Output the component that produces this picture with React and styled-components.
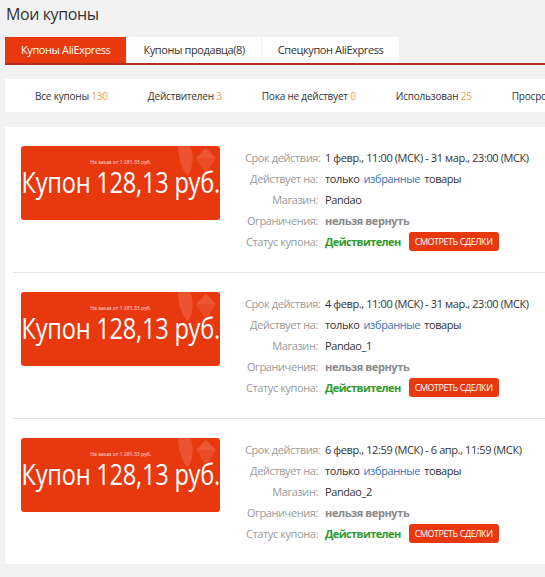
import React from "react";
import styled, { createGlobalStyle } from "styled-components";

const GlobalStyle = createGlobalStyle`
  body {
    margin: 0;
    background: #f2f2f2;
    font-family: "Open Sans", "Liberation Sans", sans-serif;
    color: #333;
  }
`;

const coupons = [
  { period: "1 февр., 11:00 (МСК) - 31 мар., 23:00 (МСК)", shop: "Pandao" },
  { period: "4 февр., 11:00 (МСК) - 31 мар., 23:00 (МСК)", shop: "Pandao_1" },
  { period: "6 февр., 12:59 (МСК) - 6 апр., 11:59 (МСК)", shop: "Pandao_2" },
];

const filters = [
  { name: "Все купоны", count: 130 },
  { name: "Действителен", count: 3 },
  { name: "Пока не действует", count: 0 },
  { name: "Использован", count: 25 },
  { name: "Просрочен", count: 102 },
];

export default function App() {
  return (
    <React.Fragment>
      <GlobalStyle />
      <Page>
        <Title>Мои купоны</Title>
        <Tabs>
          <Tab active>Купоны AliExpress</Tab>
          <Tab>Купоны продавца(8)</Tab>
          <Tab>Спецкупон AliExpress</Tab>
        </Tabs>
        <FilterBar>
          {filters.map((f) => (
            <Filter key={f.name}>
              {f.name} <Count>{f.count}</Count>
            </Filter>
          ))}
        </FilterBar>
        <List>
          {coupons.map((c, i) => (
            <Row key={c.shop} last={i === coupons.length - 1}>
              <Card>
                <Deco viewBox="0 0 44 34">
                  <path d="M4 0 H16 C20 8 20 18 14 30 C8 24 4 12 4 0 Z" fill="#fff" opacity="0.14" />
                  <path d="M22 12 L42 12 L32 28 Z" fill="#fff" opacity="0.1" />
                  <path d="M22 12 L32 2 L42 12 Z" fill="#fff" opacity="0.16" />
                </Deco>
                <MinOrder>На заказ от 1 281,33 руб.</MinOrder>
                <Amount>Купон 128,13 руб.</Amount>
              </Card>
              <Details>
                <Label>Срок действия:</Label>
                <Value>{c.period}</Value>
                <Label>Действует на:</Label>
                <Value>
                  только <Link>избранные</Link> товары
                </Value>
                <Label>Магазин:</Label>
                <Value>{c.shop}</Value>
                <Label>Ограничения:</Label>
                <Value muted>нельзя вернуть</Value>
                <Label>Статус купона:</Label>
                <Value>
                  <Status>Действителен</Status>
                  <Button>Смотреть сделки</Button>
                </Value>
              </Details>
            </Row>
          ))}
        </List>
      </Page>
    </React.Fragment>
  );
}

const Page = styled.div`
  padding: 0 0 0 5px;
  width: 560px;
`;

const Title = styled.h1`
  margin: 0;
  padding: 3px 0 0 1px;
  height: 34px;
  font-size: 16px;
  font-weight: 400;
  line-height: 22px;
  color: #333;
  letter-spacing: -0.4px;
`;

const Tabs = styled.div`
  display: flex;
  gap: 1px;
  border-bottom: 2px solid #b3321f;
`;

const Tab = styled.div`
  height: 26px;
  line-height: 26px;
  padding: 0 16px;
  font-size: 11px;
  letter-spacing: -0.4px;
  background: ${(p) => (p.active ? "#e8380d" : "#fff")};
  color: ${(p) => (p.active ? "#fff" : "#333")};
`;

const FilterBar = styled.div`
  margin-top: 14px;
  height: 33px;
  display: flex;
  align-items: center;
  gap: 40px;
  padding-left: 30px;
  background: #fff;
  white-space: nowrap;
  overflow: hidden;
`;

const Filter = styled.span`
  font-size: 10px;
  letter-spacing: -0.2px;
  color: #333;
`;

const Count = styled.span`
  color: #f29a4e;
`;

const List = styled.div`
  margin-top: 15px;
  background: #fff;
`;

const Row = styled.div`
  display: flex;
  align-items: flex-start;
  padding: 19px 0 20px;
  margin-left: ${(p) => (p.last ? "0" : "8px")};
  padding-left: ${(p) => (p.last ? "16px" : "8px")};
  border-bottom: ${(p) => (p.last ? "none" : "1px solid #e6e6e6")};
`;

const Card = styled.div`
  position: relative;
  flex: none;
  width: 199px;
  height: 74px;
  border-radius: 3px;
  background: #e8380d;
  color: #fff;
  display: flex;
  flex-direction: column;
  align-items: center;
  overflow: hidden;
`;

const Deco = styled.svg`
  position: absolute;
  top: 0;
  right: 2px;
  width: 44px;
  height: 34px;
`;

const MinOrder = styled.div`
  margin-top: 12px;
  font-size: 6px;
  line-height: 8px;
  opacity: 0.85;
  transform: scaleX(0.85);
`;

const Amount = styled.div`
  margin-top: 1px;
  font-size: 29px;
  line-height: 30px;
  letter-spacing: -0.3px;
  white-space: nowrap;
  transform: scaleX(0.815);
`;

const Details = styled.div`
  margin: 1px 0 0 25px;
  display: grid;
  grid-template-columns: 73px auto;
  column-gap: 7px;
  font-size: 11px;
  line-height: 21px;
  letter-spacing: -0.4px;
  white-space: nowrap;
`;

const Label = styled.div`
  text-align: right;
  color: #9a9a9a;
`;

const Value = styled.div`
  display: flex;
  align-items: center;
  gap: 4px;
  color: ${(p) => (p.muted ? "#8a8a8a" : "#333")};
  font-weight: ${(p) => (p.muted ? 700 : 400)};
  & > :not(button) {
    white-space: pre;
  }
`;

const Link = styled.span`
  color: #3a73b5;
`;

const Status = styled.span`
  font-weight: 700;
  color: #2f9a2f;
  letter-spacing: -0.6px;
  margin-right: 4px;
`;

const Button = styled.button`
  height: 19px;
  padding: 0 6px;
  border: none;
  border-radius: 3px;
  background: #e8380d;
  color: #fff;
  font-family: inherit;
  font-size: 9px;
  letter-spacing: -0.45px;
  text-transform: uppercase;
  cursor: pointer;
`;
